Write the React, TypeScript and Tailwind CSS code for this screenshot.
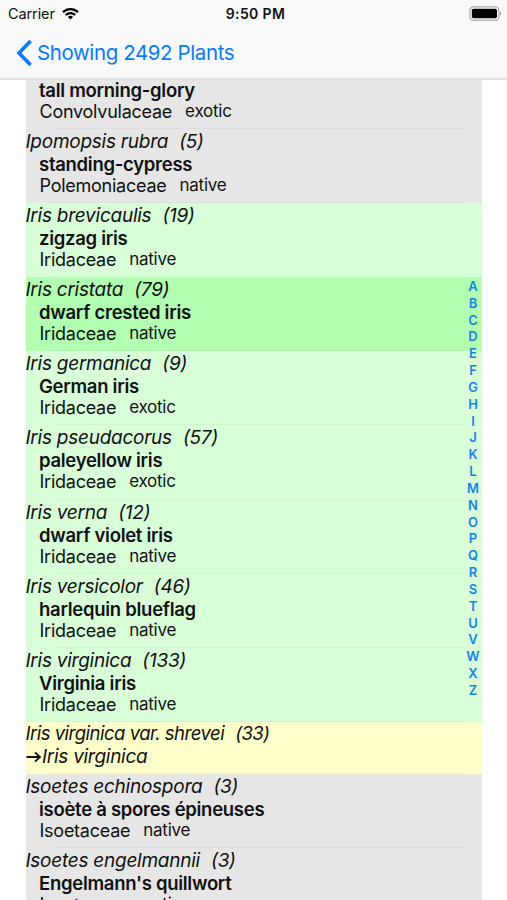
import React from 'react'

type Plant = {
  name?: string
  count?: number
  common?: string
  family?: string
  origin?: string
  synonym?: string
  color: string
}

const plants: Plant[] = [
  { common: 'tall morning-glory', family: 'Convolvulaceae', origin: 'exotic', color: 'bg-[#e6e6e6]' },
  { name: 'Ipomopsis rubra', count: 5, common: 'standing-cypress', family: 'Polemoniaceae', origin: 'native', color: 'bg-[#e6e6e6]' },
  { name: 'Iris brevicaulis', count: 19, common: 'zigzag iris', family: 'Iridaceae', origin: 'native', color: 'bg-[#d9ffd9]' },
  { name: 'Iris cristata', count: 79, common: 'dwarf crested iris', family: 'Iridaceae', origin: 'native', color: 'bg-[#b2ffb2]' },
  { name: 'Iris germanica', count: 9, common: 'German iris', family: 'Iridaceae', origin: 'exotic', color: 'bg-[#d9ffd9]' },
  { name: 'Iris pseudacorus', count: 57, common: 'paleyellow iris', family: 'Iridaceae', origin: 'exotic', color: 'bg-[#d9ffd9]' },
  { name: 'Iris verna', count: 12, common: 'dwarf violet iris', family: 'Iridaceae', origin: 'native', color: 'bg-[#d9ffd9]' },
  { name: 'Iris versicolor', count: 46, common: 'harlequin blueflag', family: 'Iridaceae', origin: 'native', color: 'bg-[#d9ffd9]' },
  { name: 'Iris virginica', count: 133, common: 'Virginia iris', family: 'Iridaceae', origin: 'native', color: 'bg-[#d9ffd9]' },
  { name: 'Iris virginica var. shrevei', count: 33, synonym: 'Iris virginica', color: 'bg-[#ffffcc]' },
  { name: 'Isoetes echinospora', count: 3, common: 'isoète à spores épineuses', family: 'Isoetaceae', origin: 'native', color: 'bg-[#e6e6e6]' },
  { name: 'Isoetes engelmannii', count: 3, common: "Engelmann's quillwort", family: 'Isoetaceae', origin: 'native', color: 'bg-[#e6e6e6]' },
]

const letters = 'ABCDEFGHIJKLMNOPQRSTUVWXZ'.split('')

const StatusBar = () => (
  <div className="grid h-[27px] grid-cols-[1fr_auto_1fr] items-center pr-[5px] pl-[8px] text-[14.5px]">
    <div className="flex items-center gap-[7px] tracking-[-0.1px]">
      <span>Carrier</span>
      <svg width="17" height="13" viewBox="0 0 17 13" fill="none" stroke="#000" strokeWidth="2.2">
        <path d="M1 5.1a10.7 10.7 0 0 1 15 0" />
        <path d="M3.8 8a6.7 6.7 0 0 1 9.4 0" />
        <path d="M8.5 12.6 5.9 9.9a3.8 3.8 0 0 1 5.2 0z" fill="#000" stroke="none" />
      </svg>
    </div>
    <span className="pl-[1px] text-[14px] font-semibold tracking-[0.35px]">9:50 PM</span>
    <svg className="justify-self-end" width="33" height="15" viewBox="0 0 33 15">
      <rect x="0.9" y="0.9" width="29" height="13.2" rx="3.6" fill="#fff" stroke="#aaa" strokeWidth="1.2" />
      <rect x="2.8" y="2.8" width="25.2" height="9.4" rx="1.8" fill="#000" />
      <path d="M31 5.5c1.7.5 1.7 3.5 0 4z" fill="#aaa" />
    </svg>
  </div>
)

const PlantRow = ({ plant }: { plant: Plant }) => (
  <li
    className={`flex shrink-0 flex-col whitespace-nowrap ${plant.color} ${
      plant.synonym ? 'h-[52px]' : plant.name ? 'h-[74.1px]' : 'h-[49.1px]'
    }`}
  >
    {plant.name && (
      <p
        className={`h-[24px] italic ${
          plant.synonym
            ? 'text-[18.5px] leading-[23px] tracking-[-0.5px]'
            : 'text-[19px] leading-[25px] tracking-[-0.25px]'
        }`}
      >
        <span>{plant.name}</span>
        <span className="ml-[11px]">({plant.count})</span>
      </p>
    )}
    {plant.synonym ? (
      <p className="flex h-[22px] items-center text-[19px] leading-[22px] tracking-[-0.28px] italic">
        <svg className="-ml-[0.5px]" width="17" height="14" viewBox="0 0 17 14" fill="none" stroke="#111" strokeWidth="1.8">
          <path d="M1.5 7H15M10 2.3 15 7l-5 4.7" />
        </svg>
        {plant.synonym}
      </p>
    ) : (
      <>
        <p
          className={`pl-[13.5px] text-[18.5px] font-semibold tracking-[-0.28px] ${
            plant.name ? 'h-[22px] leading-[22px]' : 'h-[21px] leading-[20px]'
          }`}
        >
          {plant.common}
        </p>
        <p className="flex h-[22px] pl-[14px] text-[18px] leading-[21.5px] tracking-[-0.25px]">
          <span>{plant.family}</span>
          <span className="ml-[13px] text-[17px] leading-[20.5px]">{plant.origin}</span>
        </p>
      </>
    )}
    <div className="mt-auto mr-[18px] ml-[25px] h-px shrink-0 bg-black/4" />
  </li>
)

const App = () => (
  <main className="flex h-[900px] w-[507px] flex-col overflow-hidden bg-white font-['Inter',sans-serif] text-[#111]">
    <header className="h-[80px] shrink-0 border-b-2 border-[#e2e2e2] bg-[#f9f9f9]">
      <StatusBar />
      <div className="flex h-[51px] items-center gap-[4px] pl-[16px] text-[#0a7aff]">
        <svg width="17" height="28" viewBox="0 0 17 28" fill="none" stroke="currentColor" strokeWidth="3.6">
          <path d="M14.6 2 3 14l11.6 12" />
        </svg>
        <span className="pt-[2px] text-[20.5px] tracking-[-0.4px]">Showing 2492 Plants</span>
      </div>
    </header>
    <div className="relative mr-[25px] ml-[25.5px] flex-1 overflow-hidden">
      <ul className="flex flex-col">
        {plants.map((plant) => (
          <PlantRow key={plant.common ?? plant.name} plant={plant} />
        ))}
      </ul>
      <nav className="absolute top-[198px] right-0 w-[18px] text-center text-[13px] font-semibold text-[#1683e6]">
        {letters.map((letter) => (
          <span key={letter} className="block h-[16.83px] leading-[16.83px]">
            {letter}
          </span>
        ))}
      </nav>
    </div>
  </main>
)

export default App
